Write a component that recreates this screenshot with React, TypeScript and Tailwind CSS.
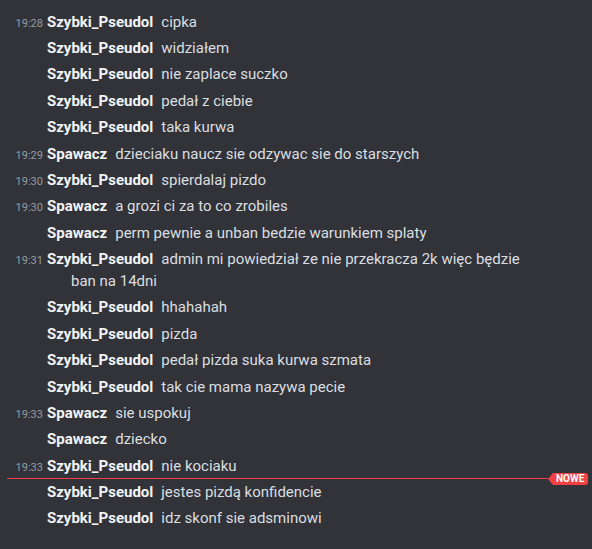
const msgs: { t?: string; u: string; m: string }[] = [
  { t: '19:28', u: 'Szybki_Pseudol', m: 'cipka' },
  { u: 'Szybki_Pseudol', m: 'widziałem' },
  { u: 'Szybki_Pseudol', m: 'nie zaplace suczko' },
  { u: 'Szybki_Pseudol', m: 'pedał z ciebie' },
  { u: 'Szybki_Pseudol', m: 'taka kurwa' },
  { t: '19:29', u: 'Spawacz', m: 'dzieciaku naucz sie odzywac sie do starszych' },
  { t: '19:30', u: 'Szybki_Pseudol', m: 'spierdalaj pizdo' },
  { t: '19:30', u: 'Spawacz', m: 'a grozi ci za to co zrobiles' },
  { u: 'Spawacz', m: 'perm pewnie a unban bedzie warunkiem splaty' },
  { t: '19:31', u: 'Szybki_Pseudol', m: 'admin mi powiedział ze nie przekracza 2k więc będzie ban na 14dni' },
  { u: 'Szybki_Pseudol', m: 'hhahahah' },
  { u: 'Szybki_Pseudol', m: 'pizda' },
  { u: 'Szybki_Pseudol', m: 'pedał pizda suka kurwa szmata' },
  { u: 'Szybki_Pseudol', m: 'tak cie mama nazywa pecie' },
  { t: '19:33', u: 'Spawacz', m: 'sie uspokuj' },
  { u: 'Spawacz', m: 'dziecko' },
  { t: '19:33', u: 'Szybki_Pseudol', m: 'nie kociaku' },
];

const after = [
  { u: 'Szybki_Pseudol', m: 'jestes pizdą konfidencie' },
  { u: 'Szybki_Pseudol', m: 'idz skonf sie adsminowi' },
];

function Row({ t, u, m }: { t?: string; u: string; m: string }) {
  return (
    <div className="py-[2.2px] pr-[50px] pl-[71px] -indent-[24px] leading-[22px] text-[15px]">
      {t && (
        <span className="inline-block indent-0 w-[41px] -ml-[45px] mr-[4px] text-right text-[11px] leading-[12px] text-[#949ba4] whitespace-nowrap">
          {t}
        </span>
      )}
      <span className="font-bold text-[#f2f3f5]">{u}</span>
      <span className="ml-[8px] text-[#dbdee1]">{m}</span>
    </div>
  );
}

export default function App() {
  return (
    <div
      className="w-[592px] h-[549px] bg-[#313338] pt-[8.5px] overflow-hidden"
      style={{ fontFamily: '"Roboto", "Noto Sans", sans-serif' }}
    >
      {msgs.map((x, i) => (
        <Row key={i} {...x} />
      ))}
      <div className="relative h-0 ml-[7px] mr-[44px]">
        <div className="absolute left-0 right-0 top-[-0.5px] h-px bg-[#f23f43]" />
        <div className="absolute left-full top-[-6px] flex items-center">
          <div className="w-0 h-0 border-y-[6px] border-y-transparent border-r-[5px] border-r-[#f23f43]" />
          <div className="h-[12px] bg-[#f23f43] rounded-r-[3px] pl-[3px] pr-[4px] text-[10px] leading-[12px] font-bold text-white">
            NOWE
          </div>
        </div>
      </div>
      {after.map((x, i) => (
        <Row key={i} {...x} />
      ))}
    </div>
  );
}
